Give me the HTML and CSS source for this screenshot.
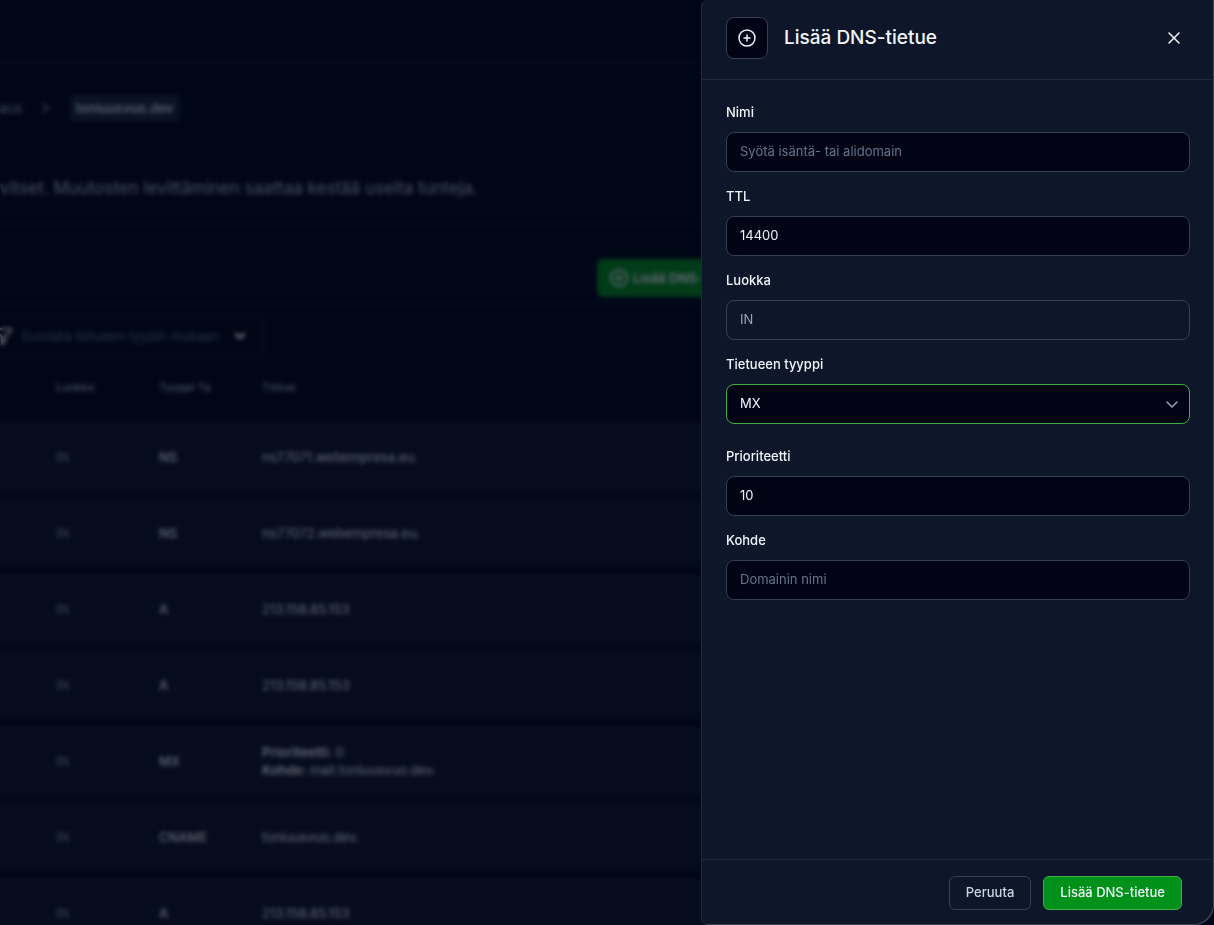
FILE: index.html
```html
<!DOCTYPE html>
<html lang="fi">
<head>
  <meta charset="UTF-8">
  <meta name="viewport" content="width=device-width, initial-scale=1.0">
  <title>Lisää DNS-tietue</title>
  <link rel="stylesheet" href="styles.css">
</head>
<body>

  <!-- DNS page behind the drawer -->
  <div class="page" inert>
    <header class="top-bar"></header>

    <nav class="breadcrumb">
      <a href="#">aus</a>
      <svg class="crumb-arrow" viewBox="0 0 16 16" width="16" height="16"><path d="M6 4l4 4-4 4"/></svg>
      <a href="#" class="current">toniuusvuo.dev</a>
    </nav>

    <p class="intro">vitset. Muutosten levittäminen saattaa kestää useita tunteja.</p>

    <div class="toolbar">
      <button class="add-btn">
        <svg viewBox="0 0 20 20" width="20" height="20"><circle cx="10" cy="10" r="8"/><path d="M10 7v6M7 10h6"/></svg>
        Lisää DNS-
      </button>
    </div>

    <div class="filter-row">
      <button class="filter">
        <svg viewBox="0 0 12 20" width="12" height="20"><path d="M-4 3h15v2L5 11v5l-3 2v-7l-6-6z"/></svg>
        <span>Suodata tietueen tyypin mukaan</span>
        <svg class="filter-arrow" viewBox="0 0 16 16" width="16" height="16"><path d="M4 6l4 4 4-4"/></svg>
      </button>
    </div>

    <table class="records">
      <thead>
        <tr>
          <th class="col-class">Luokka</th>
          <th class="col-type">
            <span class="sort">Tyyppi
              <svg viewBox="0 0 12 12" width="12" height="12"><path d="M1 4l2-2v7M9 3v7l2-2M9 10l-2-2"/></svg>
            </span>
          </th>
          <th>Tietue</th>
        </tr>
      </thead>
      <tbody>
        <tr><td>IN</td><td>NS</td><td>ns77071.webempresa.eu.</td></tr>
        <tr><td>IN</td><td>NS</td><td>ns77072.webempresa.eu.</td></tr>
        <tr><td>IN</td><td>A</td><td>213.158.85.153</td></tr>
        <tr><td>IN</td><td>A</td><td>213.158.85.153</td></tr>
        <tr><td>IN</td><td>MX</td><td><b>Prioriteetti:</b> 0<br><b>Kohde:</b> mail.toniuusvuo.dev.</td></tr>
        <tr><td>IN</td><td>CNAME</td><td>toniuusvuo.dev.</td></tr>
        <tr><td>IN</td><td>A</td><td>213.158.85.153</td></tr>
      </tbody>
    </table>
  </div>

  <div class="overlay">
    <form class="drawer" onsubmit="return false">
      <div class="drawer-header">
        <div class="icon-box">
          <svg viewBox="0 0 20 20" width="20" height="20"><circle cx="10" cy="10" r="8"/><path d="M10 7v6M7 10h6"/></svg>
        </div>
        <h2>Lisää DNS-tietue</h2>
        <button type="button" class="close-btn" aria-label="Sulje">
          <svg viewBox="0 0 16 16" width="16" height="16"><path d="M3 3l10 10M13 3L3 13"/></svg>
        </button>
      </div>

      <div class="drawer-body">
        <div class="field">
          <label for="name">Nimi</label>
          <input type="text" id="name" placeholder="Syötä isäntä- tai alidomain">
        </div>
        <div class="field">
          <label for="ttl">TTL</label>
          <input type="text" id="ttl" value="14400">
        </div>
        <div class="field">
          <label for="class">Luokka</label>
          <input type="text" id="class" value="IN" disabled>
        </div>
        <div class="field type-field">
          <label for="type">Tietueen tyyppi</label>
          <div class="select-wrap">
            <select id="type">
              <option>A</option>
              <option>CNAME</option>
              <option selected>MX</option>
              <option>NS</option>
            </select>
            <svg viewBox="0 0 16 16" width="16" height="16"><path d="M3 6l5 5 5-5"/></svg>
          </div>
        </div>
        <div class="field">
          <label for="priority">Prioriteetti</label>
          <input type="text" id="priority" value="10">
        </div>
        <div class="field">
          <label for="target">Kohde</label>
          <input type="text" id="target" placeholder="Domainin nimi">
        </div>
      </div>

      <div class="drawer-footer">
        <button type="button" class="btn cancel">Peruuta</button>
        <button type="submit" class="btn submit">Lisää DNS-tietue</button>
      </div>
    </form>
  </div>

</body>
</html>
```

FILE: styles.css
```css
:root {
  --bg: #020617;
  --panel: #0e1629;
  --input-bg: #020416;
  --border: #334155;
  --line: #1e293b;
  --text: #f1f5f9;
  --muted: #64748b;
  --green: #00911a;
  --green-light: #3cb043;
}

* {
  box-sizing: border-box;
}

body {
  margin: 0;
  height: 100vh;
  overflow: hidden;
  background-color: var(--bg);
  color: var(--text);
  font-family: Inter, "Liberation Sans", sans-serif;
  font-size: 13px;
  line-height: 20px;
}

button, input, select {
  font: inherit;
  color: inherit;
}

svg {
  flex: none;
  fill: none;
  stroke: currentColor;
  stroke-width: 1.5;
  stroke-linecap: round;
  stroke-linejoin: round;
}

/* Page behind the drawer */
.page {
  width: calc(100% - 505px);
}

.top-bar {
  height: 62px;
  border-bottom: 1px solid var(--line);
}

.breadcrumb {
  display: flex;
  align-items: center;
  gap: 16px;
  padding: 33px 0;
  color: #94a3b8;
}

.breadcrumb a {
  color: inherit;
  text-decoration: none;
}

.breadcrumb .current {
  padding: 3px 6px;
  border-radius: 4px;
  background-color: #172338;
  color: #cbd5e1;
  font-weight: 600;
}

.intro {
  margin: 0;
  padding: 22px 0 24px;
  border-bottom: 1px solid var(--line);
  color: #a3b1c4;
  font-size: 17px;
  line-height: 24px;
  white-space: nowrap;
}

.toolbar {
  padding: 34px 0 6px 597px;
  border-bottom: 1px solid var(--line);
}

.add-btn {
  display: flex;
  align-items: center;
  gap: 4px;
  height: 38px;
  padding: 0 12px;
  border: none;
  border-radius: 6px;
  background-color: #008a1a;
  font-weight: 600;
  white-space: nowrap;
}

.add-btn svg {
  stroke-width: 2;
}

.filter-row {
  padding-top: 12px;
}

.filter {
  display: flex;
  align-items: center;
  gap: 9px;
  height: 40px;
  padding: 0 14px 0 0;
  border: 1px solid var(--line);
  border-left: none;
  border-radius: 0 6px 6px 0;
  background: none;
  color: #56708a;
}

.filter svg {
  color: #e2e8f0;
  stroke-width: 2;
}

.filter .filter-arrow {
  margin-left: 4px;
  stroke-width: 3;
}

.records {
  width: 100%;
  border-spacing: 0 6px;
  table-layout: fixed;
  text-align: left;
}

.records th {
  height: 54px;
  padding: 15px 0 0;
  color: #a3b1c4;
  font-size: 11px;
  font-weight: 500;
  vertical-align: top;
}

.sort {
  display: flex;
  align-items: center;
  gap: 4px;
}

.records td {
  height: 70px;
  padding: 0;
  background-color: #0d1427;
  color: #e2e8f0;
  line-height: 18px;
}

.records th:first-child,
.records td:first-child {
  padding-left: 56px;
}

.records td:first-child {
  color: #8a99ae;
}

.records td:nth-child(2) {
  font-weight: 500;
}

.records b {
  font-weight: 600;
}

.col-class {
  width: 159px;
}

.col-type {
  width: 103px;
}

/* Drawer */
.overlay {
  position: fixed;
  inset: 0;
  display: flex;
  justify-content: flex-end;
  background-color: rgba(2, 6, 23, 0.6);
  backdrop-filter: blur(2px);
}

.drawer {
  display: flex;
  flex-direction: column;
  width: 513px;
  max-width: 100%;
  border-left: 1px solid var(--line);
  border-radius: 6px 0 20px 6px;
  background-color: var(--panel);
  box-shadow: inset -1px -1px 0 #3b4354;
}

.drawer-header {
  display: flex;
  align-items: center;
  gap: 16px;
  padding: 17px 24px 20px;
  border-bottom: 1px solid var(--line);
}

.icon-box {
  display: flex;
  align-items: center;
  justify-content: center;
  width: 42px;
  height: 42px;
  border: 1px solid var(--border);
  border-radius: 8px;
  background-color: var(--input-bg);
}

.drawer-header h2 {
  flex: 1;
  margin: 0;
  font-size: 19px;
  font-weight: 500;
  line-height: 28px;
}

.close-btn {
  display: flex;
  padding: 8px;
  border: none;
  background: none;
  cursor: pointer;
}

.drawer-body {
  flex: 1;
  display: flex;
  flex-direction: column;
  gap: 14px;
  padding: 22px 24px;
}

.field {
  display: flex;
  flex-direction: column;
  gap: 10px;
}

.field label {
  font-weight: 500;
}

.field input,
.field select {
  width: 100%;
  height: 40px;
  padding: 0 13px 2px;
  border: 1px solid var(--border);
  border-radius: 8px;
  background-color: var(--input-bg);
  outline: none;
}

.field input::placeholder {
  color: var(--muted);
}

.field input:disabled {
  background-color: transparent;
  color: #94a3b8;
}

.type-field {
  margin-bottom: 8px;
}

.select-wrap {
  position: relative;
}

.field select {
  display: block;
  appearance: none;
  border-color: var(--green-light);
}

.select-wrap svg {
  position: absolute;
  top: 12px;
  right: 10px;
  color: #94a3b8;
  pointer-events: none;
}

.drawer-footer {
  display: flex;
  justify-content: flex-end;
  gap: 12px;
  padding: 16px 32px 15px;
  border-top: 1px solid var(--line);
}

.btn {
  height: 34px;
  padding: 0 16px 2px;
  border: 1px solid var(--border);
  border-radius: 6px;
  background: none;
  font-weight: 500;
  cursor: pointer;
}

.cancel {
  color: #cbd5e1;
}

.submit {
  border-color: var(--green-light);
  background-color: var(--green);
}
```
